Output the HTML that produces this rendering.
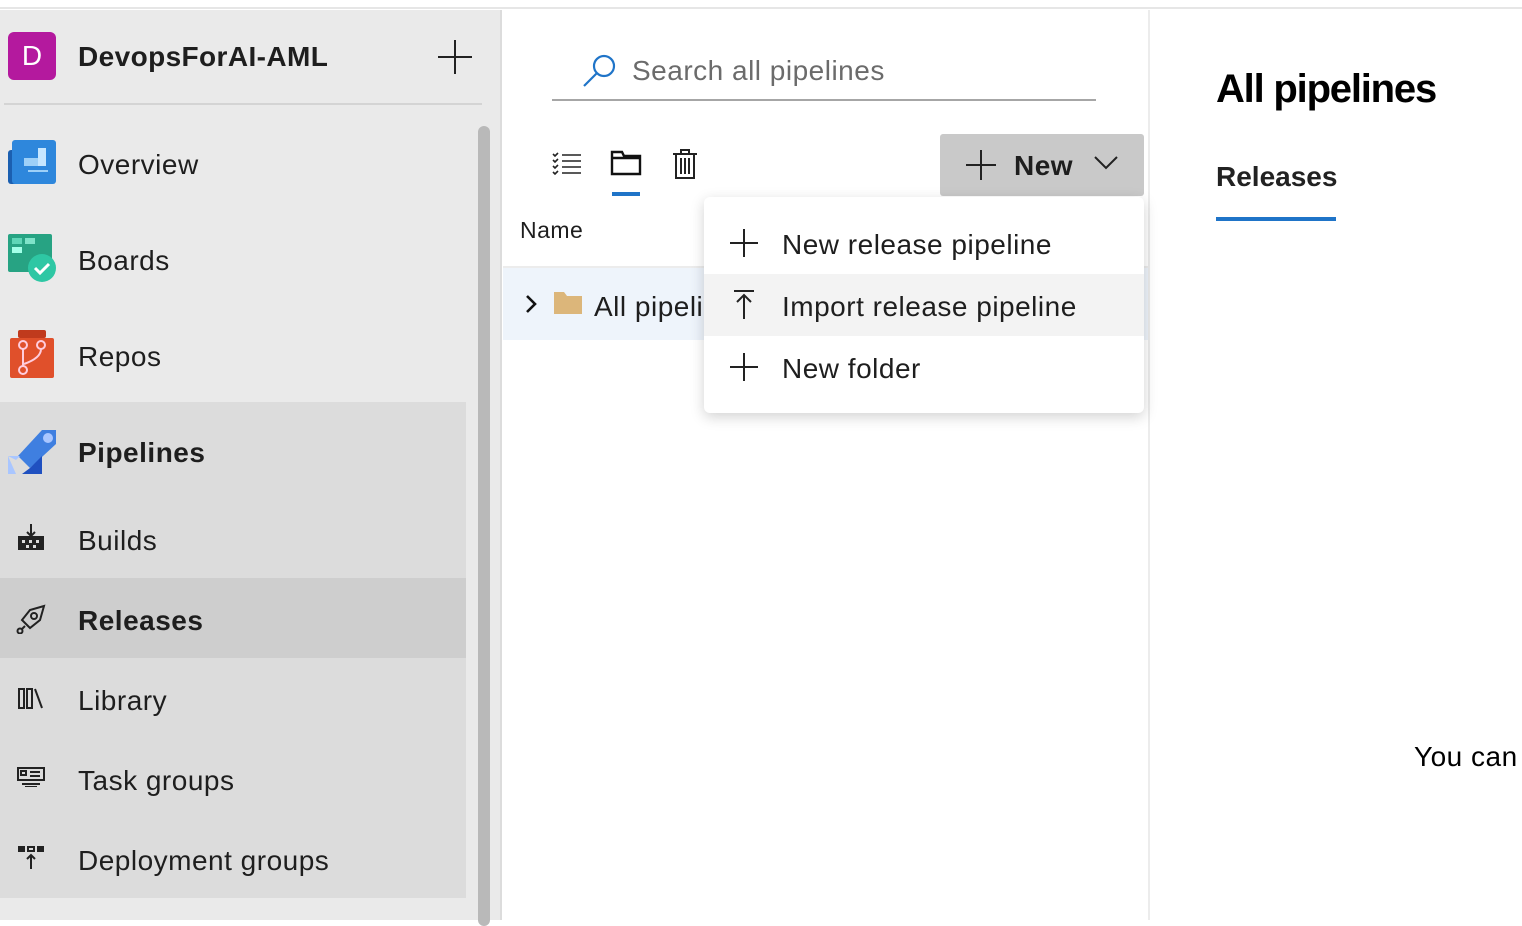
<!DOCTYPE html>
<html><head><meta charset="utf-8"><style>
*{margin:0;padding:0;box-sizing:border-box}
body{width:1522px;height:920px;overflow:hidden;background:#fff;font-family:"Liberation Sans",sans-serif;color:#1e1e1e;position:relative}
.a{position:absolute}
.t{position:absolute;font-size:28px;white-space:nowrap;letter-spacing:0.5px}
</style></head><body>
<div class="a" style="left:0;top:0;width:1522px;height:9px;background:#fff;border-bottom:2px solid #e6e6e6"></div>
<div class="a" style="left:0;top:10px;width:502px;height:910px;background:#eaeaea;border-right:2px solid #dcdcdc"></div>
<div class="a" style="left:0;top:402px;width:466px;height:496px;background:#dcdcdc"></div>
<div class="a" style="left:0;top:578px;width:466px;height:80px;background:#cecece"></div>
<div class="a" style="left:478px;top:126px;width:12px;height:800px;background:#b9b9b9;border-radius:6px"></div>
<div class="a" style="left:4px;top:103px;width:478px;height:2px;background:#d4d4d4"></div>
<div class="a" style="left:8px;top:32px;width:48px;height:48px;background:#b4199e;border-radius:6px;color:#fff;font-size:28px;text-align:center;line-height:48px">D</div>
<div class="t" style="left:78px;top:41px;font-weight:bold;letter-spacing:0.4px">DevopsForAI-AML</div>
<svg class="a" style="left:438px;top:40px" width="34" height="34"><path d="M17 0V34M0 17H34" stroke="#222" stroke-width="2"/></svg>
<svg class="a" style="left:8px;top:140px" width="48" height="44"><rect x="0" y="10" width="10" height="34" rx="3" fill="#1b5fb0"/><rect x="4" y="0" width="44" height="44" rx="3" fill="#2e87dc"/><rect x="16" y="18" width="22" height="8" fill="#9dd0f8"/><rect x="30" y="8" width="8" height="18" fill="#c6e6ff"/><rect x="20" y="30" width="20" height="2" fill="#9dd0f8"/></svg>
<svg class="a" style="left:8px;top:234px" width="48" height="48"><rect x="0" y="0" width="44" height="38" rx="2" fill="#27a383"/><rect x="4" y="4" width="10" height="6" fill="#5fd6b7"/><rect x="17" y="4" width="10" height="6" fill="#7fe3c9"/><rect x="4" y="13" width="10" height="6" fill="#a3ffe8"/><circle cx="34" cy="34" r="14" fill="#2ec7a4"/><path d="M27 34l5 5 9-9" stroke="#fff" stroke-width="3" fill="none"/></svg>
<svg class="a" style="left:10px;top:330px" width="44" height="48"><rect x="8" y="0" width="28" height="8" rx="2" fill="#c03a1d"/><rect x="0" y="8" width="44" height="40" rx="2" fill="#e0502b"/><circle cx="13" cy="15" r="4" fill="none" stroke="#fcd" stroke-width="2"/><circle cx="31" cy="15" r="4" fill="none" stroke="#fcd" stroke-width="2"/><circle cx="13" cy="40" r="4" fill="none" stroke="#fcd" stroke-width="2"/><path d="M13 19V36M31 19Q31 28 14 34" stroke="#fcd" stroke-width="2" fill="none"/></svg>
<svg class="a" style="left:8px;top:426px" width="48" height="48"><path d="M10 30L34 4h14v14L22 42z" fill="#3f7fe0"/><circle cx="40" cy="12" r="5" fill="#a9c6ff"/><path d="M22 42L34 30v18H14z" fill="#1f50c0"/><path d="M0 30l12 0-4 4zM0 30v18h8" fill="#a9c6ff"/></svg>
<svg class="a" style="left:17px;top:524px" width="28" height="28" fill="#222"><path d="M14 0v12M10 8l4 4 4-4" stroke="#222" stroke-width="2" fill="none"/><rect x="1" y="12" width="26" height="14"/><rect x="5" y="16" width="3" height="3" fill="#dcdcdc"/><rect x="12" y="16" width="3" height="3" fill="#dcdcdc"/><rect x="19" y="16" width="3" height="3" fill="#dcdcdc"/><rect x="9" y="21" width="3" height="3" fill="#dcdcdc"/><rect x="16" y="21" width="3" height="3" fill="#dcdcdc"/></svg>
<svg class="a" style="left:16px;top:604px" width="30" height="30" fill="none" stroke="#222" stroke-width="2"><path d="M28 2L14 6 6 16l8 8 10-8z"/><circle cx="18" cy="12" r="3"/><circle cx="4" cy="27" r="2.5"/><path d="M9 22l-3 3"/></svg>
<svg class="a" style="left:18px;top:688px" width="26" height="22" fill="none" stroke="#222" stroke-width="2"><rect x="1" y="1" width="5" height="19"/><rect x="9" y="1" width="5" height="19"/><path d="M17 1l7 19"/></svg>
<svg class="a" style="left:17px;top:767px" width="28" height="20" fill="none" stroke="#222" stroke-width="2"><rect x="1" y="1" width="26" height="12"/><path d="M5 17h18M8 20h12M13 5h10M13 9h10"/><rect x="4" y="4" width="5" height="4"/></svg>
<svg class="a" style="left:17px;top:845px" width="28" height="26" fill="#222"><rect x="1" y="1" width="7" height="6"/><rect x="11" y="2" width="6" height="4" fill="none" stroke="#222" stroke-width="2"/><rect x="20" y="1" width="7" height="6"/><path d="M14 10v14M10 14l4-4 4 4" stroke="#222" stroke-width="2" fill="none"/></svg>
<div class="t" style="left:78px;top:149px">Overview</div>
<div class="t" style="left:78px;top:245px">Boards</div>
<div class="t" style="left:78px;top:341px">Repos</div>
<div class="t" style="left:78px;top:437px;font-weight:bold">Pipelines</div>
<div class="t" style="left:78px;top:525px">Builds</div>
<div class="t" style="left:78px;top:605px;font-weight:bold">Releases</div>
<div class="t" style="left:78px;top:685px">Library</div>
<div class="t" style="left:78px;top:765px">Task groups</div>
<div class="t" style="left:78px;top:845px">Deployment groups</div>
<div class="a" style="left:1148px;top:10px;width:2px;height:910px;background:#ececec"></div>
<svg class="a" style="left:582px;top:52px" width="36" height="36" fill="none" stroke="#1f74c8" stroke-width="2.2"><circle cx="22" cy="14" r="10"/><path d="M15 21L2 34"/></svg>
<div class="t" style="left:632px;top:55px;color:#6b6b6b">Search all pipelines</div>
<div class="a" style="left:552px;top:99px;width:544px;height:2px;background:#a6a6a6"></div>
<svg class="a" style="left:552px;top:152px" width="30" height="24" fill="none" stroke="#222" stroke-width="1.6"><path d="M10 3h19M10 9h19M10 15h19M10 21h19M1 2l2 2 3-3M1 8l2 2 3-3M1 14l2 2 3-3M1 20l2 2 3-3"/></svg>
<svg class="a" style="left:610px;top:150px" width="32" height="26" fill="none" stroke="#111" stroke-width="2.4"><path d="M2 2h10l2 4h16v18H2z M2 8h28"/></svg>
<div class="a" style="left:612px;top:192px;width:28px;height:4px;background:#1f74c8"></div>
<svg class="a" style="left:672px;top:148px" width="26" height="32" fill="none" stroke="#222" stroke-width="2"><path d="M1 6h24M9 6V2h8v4M4 6v24h18V6M9 10v16M13 10v16M17 10v16"/></svg>
<div class="a" style="left:940px;top:134px;width:204px;height:62px;background:#c9c9c9;border-radius:3px"></div>
<svg class="a" style="left:966px;top:150px" width="30" height="30"><path d="M15 0V30M0 15H30" stroke="#222" stroke-width="2"/></svg>
<div class="t" style="left:1014px;top:150px;font-weight:bold">New</div>
<svg class="a" style="left:1094px;top:156px" width="24" height="14"><path d="M1 1l11 11L23 1" stroke="#222" stroke-width="2" fill="none"/></svg>
<div class="t" style="left:520px;top:217px;font-size:23px">Name</div>
<div class="a" style="left:503px;top:266px;width:645px;height:2px;background:#ececec"></div>
<div class="a" style="left:503px;top:268px;width:645px;height:72px;background:#eef4fb"></div>
<svg class="a" style="left:524px;top:294px" width="14" height="20"><path d="M3 2l8 8-8 8" stroke="#111" stroke-width="2.6" fill="none"/></svg>
<svg class="a" style="left:554px;top:292px" width="28" height="22"><path d="M0 0h10l3 4h15v18H0z" fill="#dcb67a"/></svg>
<div class="t" style="left:594px;top:291px">All pipelines</div>
<div class="a" style="left:704px;top:197px;width:440px;height:216px;background:#fff;border-radius:6px;box-shadow:0 4px 14px rgba(0,0,0,.18)"></div>
<div class="a" style="left:704px;top:274px;width:440px;height:62px;background:#f3f3f3"></div>
<svg class="a" style="left:730px;top:229px" width="28" height="28"><path d="M14 0V28M0 14H28" stroke="#222" stroke-width="2"/></svg>
<svg class="a" style="left:730px;top:290px" width="28" height="30"><path d="M4 1h20M14 5V29M7 12l7-7 7 7" stroke="#222" stroke-width="2" fill="none"/></svg>
<svg class="a" style="left:730px;top:353px" width="28" height="28"><path d="M14 0V28M0 14H28" stroke="#222" stroke-width="2"/></svg>
<div class="t" style="left:782px;top:229px">New release pipeline</div>
<div class="t" style="left:782px;top:291px">Import release pipeline</div>
<div class="t" style="left:782px;top:353px">New folder</div>
<div class="t" style="left:1216px;top:67px;font-size:40px;font-weight:bold;letter-spacing:-1.2px;color:#000">All pipelines</div>
<div class="t" style="left:1216px;top:161px;font-weight:bold;color:#222;letter-spacing:0">Releases</div>
<div class="a" style="left:1216px;top:217px;width:120px;height:4px;background:#1f74c8"></div>
<div class="t" style="left:1414px;top:741px;color:#000">You can</div>
</body></html>
